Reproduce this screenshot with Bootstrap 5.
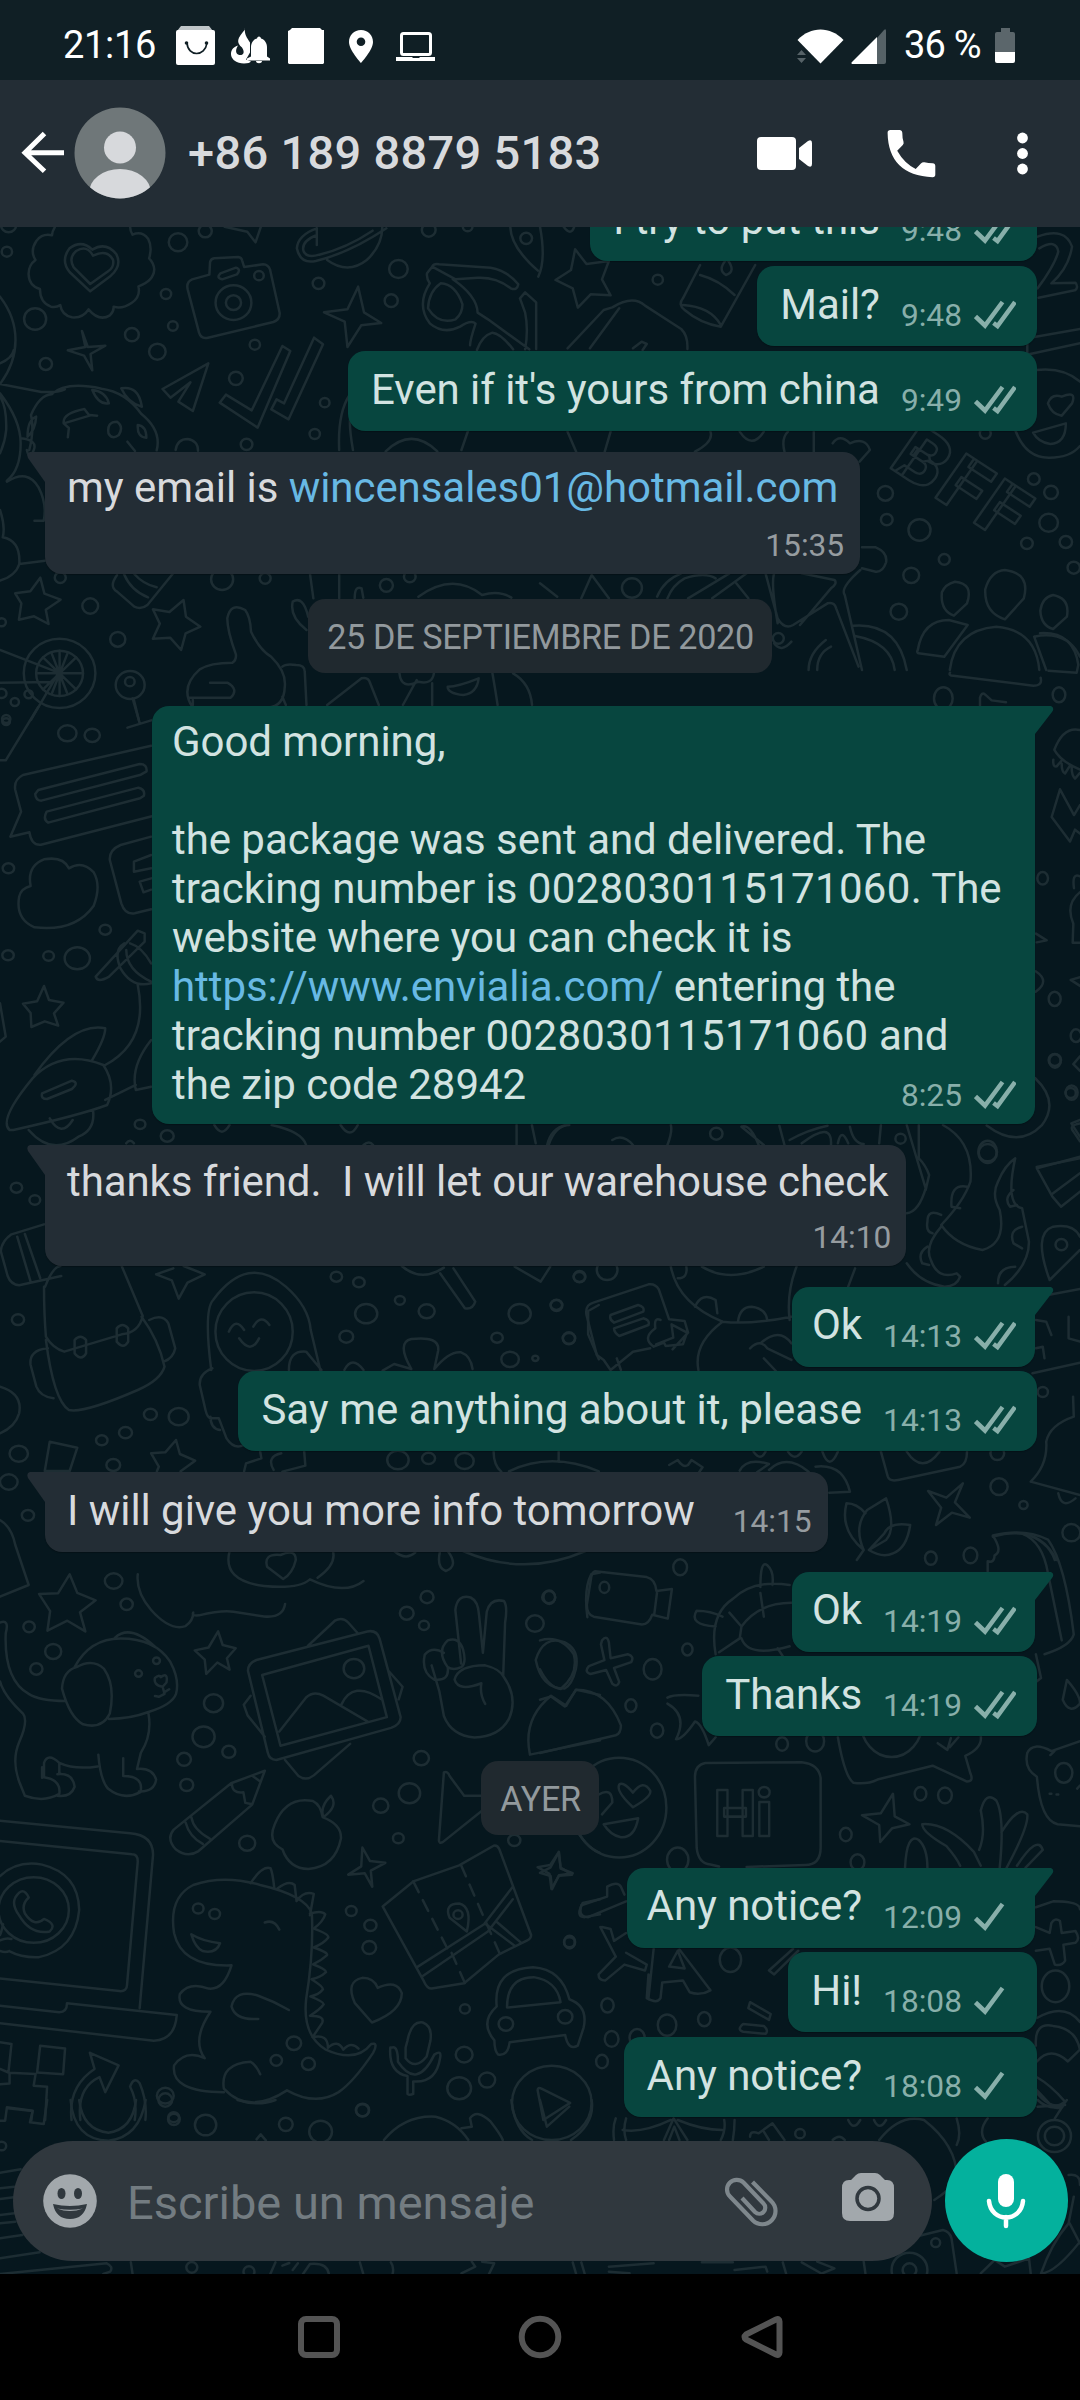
<!DOCTYPE html>
<html lang="es">
<head>
<meta charset="utf-8">
<meta name="viewport" content="width=device-width, initial-scale=1">
<title>Chat</title>
<link rel="stylesheet" href="https://cdn.jsdelivr.net/npm/bootstrap@5.3.0/dist/css/bootstrap.min.css">
<style>
  body { width: 1080px; height: 2400px; background: #000; font-family: Roboto, "Noto Sans", sans-serif; overflow: hidden; }
  svg { display: block; flex: none; }
  .statusbar { height: 80px; background: #101f25; color: #fff; font-size: 38px; line-height: 40px; padding: 0 64px 0 63px; }
  .clock { width: 93px; margin-top: 10px; letter-spacing: -.3px; white-space: nowrap; }
  .topbar { height: 147px; background: #232d35; padding: 0 0 2px 21px; }
  .peer { font-size: 47px; font-weight: 500; line-height: 56px; color: #d8dadd; margin-left: 22px; letter-spacing: .3px; }
  .chat { height: 2047px; background: #06171e; overflow: hidden; }
  .doodles { position: absolute; inset: 0; fill: none; stroke: #1d2d33; stroke-width: 2.5; stroke-linecap: round; stroke-linejoin: round; }
  .doodles * { vector-effect: non-scaling-stroke; }
  .doodles text { font-family: Roboto, sans-serif; font-weight: 900; }
  .thread { position: absolute; inset: 0 0 auto 0; margin-top: -46px; }
  .bubble { position: relative; border-radius: 17px; font-size: 42px; line-height: 49px; letter-spacing: -.05px; box-shadow: 0 1px 1px rgba(0,0,0,.25); white-space: pre; }
  .sent { align-self: flex-end; background: #07463f; color: #d2e3e1; margin-right: 43px; margin-bottom: 5px; padding: 14px 21px 14px 23px; min-height: 80px; }
  .recv { align-self: flex-start; background: #232d35; color: #d8dadd; margin-left: 45px; padding: 12px 16px 12px 22px; }
  .sent.first { margin-right: 45px; padding: 13px 19px 14px 20px; border-top-right-radius: 0; margin-bottom: 4px; }
  .recv.first { border-top-left-radius: 0; }
  .tail { position: absolute; top: 0; }
  .sent .tail { left: 100%; margin-left: -1px; fill: #07463f; }
  .recv .tail { right: 100%; margin-right: -1px; fill: #232d35; }
  .stamp { font-size: 31.7px; line-height: 32px; color: #88afaa; letter-spacing: 0; align-self: flex-end; margin-left: 21px; }
  .recv .stamp { color: #969ca0; }
  .ticks { width: 42px; margin-left: 12px; stroke: #88afaa; fill: none; stroke-width: 4.5; }
  .bubble a { color: #68b9e4; text-decoration: none; }
  .tracking { letter-spacing: .33px; }
  .lastline { height: 52px; }
  .day { align-self: center; background: #20292f; color: #92999d; border-radius: 17px; font-size: 34.2px; letter-spacing: -.35px; line-height: 40px; padding: 18px 18px 16px 19px; }
  .composer { position: absolute; left: 13px; right: 12.5px; bottom: 12px; }
  .field { width: 919px; height: 120px; border-radius: 60px; background: #30383e; padding: 0 38px 0 30px; }
  .hint { font-size: 47px; color: #737c81; line-height: 56px; margin-left: 30px; margin-top: 4px; }
  .mic { width: 123px; height: 123px; border-radius: 50%; background: #04b19d; }
  .sysnav { height: 126px; fill: none; stroke: #545454; stroke-width: 6; }
</style>
<script src="https://cdn.jsdelivr.net/npm/bootstrap@5.3.0/dist/js/bootstrap.bundle.min.js"></script>
</head>
<body class="m-0 d-flex flex-column">

<header>
  <div class="statusbar d-flex align-items-center">
    <span class="clock">21:16</span>
    <svg width="262" height="80" viewBox="174 0 262 80" style="margin-left:18px" fill="#fff">
      <path d="M181 26h28l4 5h-36z" fill="#bfc5c8"/><rect x="176" y="30" width="39" height="35" rx="2"/>
      <path d="M187 43c1 14 18 14 20 0" fill="none" stroke="#101f25" stroke-width="1.7"/><circle cx="186.500" cy="43" r="1.800" fill="#101f25"/><circle cx="206.500" cy="43" r="1.800" fill="#101f25"/>
      <path d="M245 29.500c-8 9-9 13-3 18 4 6 0 9-4 7-3-2-2-6 0-9-11 3-9 18 6 18 4 0 6-1 7-2l-5-2 4-7v-10c-3-5-6-8-5-15z"/>
      <path d="M259 36.500c1 0 2 1 2 2 4 1 6 5 6 9v9l3 2v2h-23v-2l4-2v-9c0-4 2-8 6-9 0-1 1-2 2-2zM256 61h6c0 3-6 3-6 0z"/>
      <path d="M292 28h28l2 2h2v33l-1 1h-34l-1-1V31l2-1z"/>
      <path fill-rule="evenodd" d="M361 30c-7 0-12 5-12 12 0 8 12 21 12 21s12-13 12-21c0-7-5-12-12-12zm0 7.500a4.300 4.300 0 1 1 0 8.600 4.300 4.300 0 0 1 0-8.600z"/>
      <rect x="401.500" y="33.500" width="29" height="21" rx="2" fill="none" stroke="#fff" stroke-width="3"/><path d="M396 57h16l1 1h6l1-1h15v4h-39z"/>
    </svg>
    <svg width="90" height="80" viewBox="797 0 90 80" class="ms-auto" fill="#fff">
      <path d="M797.500 40c13-14 33-14 46 0l-23 23.500z"/><path fill="#566267" d="M797 55l4.500-5 4.500 5zM797 58h9l-4.500 5z"/>
      <path fill="#566267" d="M877 38l7-8q2-2 2 1v31q0 2-2 2h-7z"/><path d="M877 37v27h-25q-1.500-1 0-2z"/>
    </svg>
    <span style="margin:9px 12px 0 17px;width:79px;letter-spacing:-.8px;white-space:nowrap">36 %</span>
    <svg width="21" height="80" viewBox="995 0 21 80"><path d="M1001 28h9v4h3q2 0 2 2v20h-20V34q0-2 2-2h4z" fill="#5b666b"/><path d="M995 52h20v9q0 2-2 2h-16q-2 0-2-2z" fill="#fff"/></svg>
  </div>
  <div class="topbar d-flex align-items-center">
    <svg width="44" height="44" viewBox="21 131 44 44" fill="none" stroke="#fff" stroke-width="5"><path d="M64 152.700H25M44.500 133.500L25 152.700l19.500 18.500"/></svg>
    <svg width="92" height="92" viewBox="0 0 92 92" style="margin-left:9px"><defs><clipPath id="av"><circle cx="46" cy="46" r="45.500"/></clipPath></defs><circle cx="46" cy="46" r="45.500" fill="#6f7779"/><g clip-path="url(#av)" fill="#d7d9dc"><circle cx="46" cy="40.500" r="16"/><ellipse cx="46" cy="86" rx="31" ry="24"/></g></svg>
    <span class="peer">+86 189 8879 5183</span>
    <svg width="323" height="60" viewBox="757 123 323 60" class="ms-auto" fill="#fff">
      <rect x="757" y="137" width="39" height="33" rx="4"/><path d="M799 148l9-7q4-2 4 2v21q0 4-4 2l-9-7z"/>
      <path d="M890.500 130h9q2.500 0 2.800 2.800 0 6 1.200 9 .6 2-.7 3.200l-5.600 5.800q7 12.500 18.500 18.200l5.200-5.600q1.400-1.500 3.500-1.200 4 .8 8.300 1 2.600.2 2.600 2.800v8.500q0 2.700-2.700 2.700-44.300-2-45-44.400 0-2.800 2.900-2.800z"/>
      <circle cx="1022.500" cy="138" r="5.400"/><circle cx="1022.500" cy="153.500" r="5.400"/><circle cx="1022.500" cy="169" r="5.400"/>
    </svg>
  </div>
</header>

<main class="chat position-relative">
  <svg class="doodles" width="1080" height="2047" viewBox="0 227 1080 2047">
    <g transform="translate(0 220) scale(.34436 .33333)" data-dots="25,15,22 20,95,15 102,297,32 133,432,18 383,344,20 457,395,24 482,222,15 502,318,14 517,67,27 596,33,19 740,374,15 685,475,20 943,548,14 914,642,15 925,190,17 1157,147,27 1136,242,19 1245,30,20 1358,20,14 1528,55,17 716,673,17 645,1078,32 770,1075,16 1122,1096,19 1190,1070,17 175,1073,16 262,1158,23 342,1258,22 5,1207,12 173,1360,104 173,1360,68 378,1395,42 377,1385,14 5,1420,14 83,1423,12 43,1446,12 18,1497,12 678,248,52 678,248,22 752,167,14">
      <path d="M159 22q-7 11-8 24-27-7-45 16-20 30-3 58-20 15-20 42 1 36 33 45 0 41 32 53 16 3 27-5 4 30 34 37 32 3 48-24 31 38 62 18 12-12 11-26 25 8 52-11 27-18 20-50 44-16 46-51-2-20-15-33 10-34-3-59-18-24-45-12-7-10-7-22"/>
      <path d="M262 214l-60-58q-27-35 0-71 35-27 66 4 40-25 70 14 17 33-16 64zM262 192l-48-50q-16-28 7-49 32-20 49 14 41-21 58 12 5 21-14 35z"/>
      <path d="M558 178l50-14 2-38q2-9 12-11l70-4q9 1 11 10l6 20 55-8q15 1 20 15l28 130q2 20-18 28l-190 47q-20 5-26-15l-33-130q-5-22 13-30zM640 160l45-17q16 5 3 20l-43 15q-18-4-5-18z"/>
      <path d="M652 20l66 15 24 32 15-45M920 25q-55 20-58 60 10 48 55 38 100-25 205-98M920 45q-48 20-38 50 10 20 45 9 80-20 155-72M920 25v50M950 120q60 45 115 0 45-42 45-98"/>
      <path d="M238 333l17 48 51-4-43 25 5 49-24-44-47-16 51-10zM1040 200l17 77 50 32-58 7-40 65-8-76-60-28 68-9zM605 430l-45 143-42-28 35-58-58 46-23-26zM820 378l23 15-95 230-110-75 18-24 75 47zM912 353l26 20-100 225-50-30 15-30 22 12z"/>
      <path d="M1482 22q2 60 80 130M1255 140q5 -10 20-7l150 10q50 10 80 50-3 20-22 12-40-34-95-32l-65 5zl-15 20q-2 15 8 30-40 65 0 120 40 35 88 10 32-22 45-9-16 50-16 65M1315 178q70 50 72 100l30 20 120 90M1280 190q-35 25-37 75 30 50 80 33 20-17 20-45-20-60-63-63zM1510 235l15-18 32 30v140M1385 390q15-43 45-52 25 3 60 50M1525 388q10-60 0-110l-15-43"/>
      <path d="M0 230q45 60 45 130t-45 132l120 24q50 2 68-8M0 430q35-15 40-40M0 520q60 80 60 150 0 80-40 112M60 655q50 5 38 35-13 35-20 0M0 700q15-35 18-70 2-70-18-100M85 690q15-60 5-105 25-60 60-62 40-40 145-17 70 10 115 75 60 50 45 110M268 510q40 5 48 40-30 5-48-40zM352 505q50-10 60 55-40-10-60-55zM80 650q0-50 25-60-2 40-25 60M185 610q-5-30 60-43l15 20-65 20zl15 14-3 28M260 585l22 2M340 605q-30 0-25 35 10 20 30 5 15-25-5-40zM400 615q-2 37 25 38 0-35-25-38zM370 665l22 28M510 690q5-33 35-33 30 5 30 35M985 690q-5-110 30-165M1025 690q-15-90-5-110M1120 694q75-75 150 0M1340 690l20-60"/>
      <path d="M20 785q60-40 92 17 25 50 15 100h-27M0 870q16 50 8 82 52 10 48 80l75-10M56 1032q-10 35-56 50"/>
      <path d="M117 1073l12 48 47 18-43 30 8 43-42-23-44 10 7-49-18-30 44-6zM533 1140l7 50 42 30-43 20-13 50-32-37-50 3 20-45-20-43 48 8zM340 1065q-25 35 0 50l50 45q20 10 38-5l75-95M360 1062q20 50 70 70M390 1062q25 30 65 40"/>
      <path d="M660 1195q10-50 52-25 15 20 17 65 25 55 58 75 45 45 40 90-2 60-50 63H560q-40-60 20-115 30-20 95-20 12-8 10-25-25-70-25-108zM610 1388h50q35 20 10 45H550M820 1340q10-10 40-5 25 0 25 20l5 100M560 1440v15M820 1430l10 25"/>
      <path d="M900 1060l10 75M985 1060v75M890 1230q-50-40-40-85 30-20 45 45M1030 1135q0-40 20-30l5 28M1215 1130q100-75 185-5 50-15 85 8"/>
      <path d="M0 1290l170 68-80 142M0 1388l150-2M173 1292v136M105 1360h136M125 1312l96 96M221 1312l-96 96M150 1300l46 122M196 1300l-46 122M385 1435l18 65M950 1455l100-80q20-5 25 15l25 65M1160 1360q5 50 55 25 40 10 45-25M1255 1390v65M1210 1380l-40 75M1300 1400q0 20 45 25 40-5 45-50-60 25-90 25zM1430 1360q10 60 15 95M1490 1360q50 30 55 95"/>
    </g>
    <g transform="translate(540 210) scale(.34436 .33333)" data-dots="342,209,15 1003,850,22 1007,929,17 1102,960,32 1434,807,17 1484,847,20 1477,938,27 1414,1000,17 1527,996,18 1550,1073,18 1174,1048,16 1078,1096,23 1042,1205,24 267,1134,29 692,1285,16 1293,670,16">
      <path d="M102 118l33 44 65-9-20 55 25 48-58-3-37 40-15-58-50-25 45-30zM465 165l-50 100q-15 20 5 35 45 40 105 50l100-185M465 195q55 15 100 60M415 285q80 5 110 60M540 150q-25 30 0 45 30-10 5-45M80 415l105-115 25-8q60-38 95-5l105 70q20 20 18 60M145 415l85-120M270 415l25-20 15 7-12 18M1380 660q30 85 100 83 60 0 88-35M1440 480q80-10 128 35M1475 580q10-30 40-20 45-20 30 20l-30 37q-30-5-40-37zM1432 668l95-28q0 60-45 62-35-5-50-34zM1445 80q80-30 100 30-10 65-60 110l70-2q10 15-2 23l-105 22M1450 115q50-30 55 10-10 40-60 110M1415 385l153-28M1420 433l148-33M1415 385v45M850 700q20-30 50 0 45-20 58 20l-30 35M80 665l25 60M205 665l-17 60M495 665q10 30-45 60M580 665q35 55 70 0M710 725q-10-40 10-60M795 725v-60M0 50q18 100-5 150M62 40q30 50 40 0"/>
      <path d="M655 1090l35 135q20 35 45 20l100-65q20-5 25 15l65 175M680 1090q-10 30 10 150M760 1090l95 20q10 10-10 25l-90 110M935 1012h40q35 15 30 45-10 30-30 28l-40-10M930 1080q-60 55-45 75l50 225M780 1380q0-50 50-90M805 1380q0-50 40-70M910 1247q130-10 155 133M915 1278q105 20 115 102M340 1160q20-50 70-70M370 1165q15-40 50-60 60-20 90 0M430 1165l120-75M500 1165l100-75M570 1120l35 45M0 1120l50 40M120 1165l30-70 50 70M680 1300q20 30 50-5"/>
      <path d="M1205 1115q55 5 35 65l-38 37q-40-15-35-70 10-25 38-32zM1350 1080q75 10 55 85l-55 63q-60-20-57-90 15-55 57-58zM1490 1155q50 10 40 65l-40 37q-35-10-37-55 5-40 37-47zM1097 1320q15-90 90-90l55 15-68 95-75-10q-6-3-2-10zM1190 1380q15-120 135-130 115 10 125 130M1435 1280q95-20 133 60M1435 1280l35 100"/>
      <g transform="rotate(34 1222 822)"><text x="1015" y="897" font-size="225" textLength="415" lengthAdjust="spacing">BFF</text></g>
    </g>
    <g transform="translate(880 560) scale(.33333 .3954)" data-dots="537,341,19 488,805,16 524,1110,18 525,1267,17 575,1347,18 588,1203,16 323,1497,28 190,350,28">
      <path d="M210 285q-5 7 10 8l240 25q28 0 22-20M300 368v-20q5-15 15-8l20 15 43 5M480 185q100-5 115 80l-5 20-85-5M600 430q-50-10-77 50 20 30 77 50M520 505q-2 20 10 17l15-15M545 515q0 20 10 25l15-20M575 525q0 20 10 28l15-15M540 580l-25 70 55 62 15-30 15 10M540 580l42 65 18-25M600 840q-45 30-20 80l-2 48 22 0M600 800q-25-10-18 30M468 945l32 17-30 5M467 1040q45 25 0 52M600 1055l-28 7 28 15M600 1255l-20 20 20 17M465 1310q75 60 20 120-70 60-165 0M600 1425q-35 5-20 20l20 25M470 1535l130-22"/>
    </g>
    <g transform="translate(0 680) scale(.38265 .33333)" data-dots="176,160,24 241,166,20 16,125,10 22,565,15 21,826,15 127,828,14 202,835,33 275,749,15 366,1333,14 437,1368,17">
      <path d="M350 60l15 70M333 143l62-22M0 241h15l85-160M395 197L60 285q-25 15-20 45l15 65-28 75 50-13q5 40 30 37l290-85M100 330l265-78q20 0 18 22l-15 10-260 78q-15 0-16-20zM122 395l240-72q18 5 14 24l-10 8-240 73q-15-10-4-33zM395 470l-80 25q-30 15-28 45l30 130q10 35 35 30l43-12M395 525l-45 20v30l45-10M395 595l-30 10 10 32 20-8M50 650q5-25 30-32-10-60 35-80 50-10 65 27 35-25 65 12 20 40 0 100-50 80-155 65-50-25-40-92zM115 918l13 42 38 8-25 32 11 37-35-13-35 17-2-42-20-28 37-7zM250 890l110-138 18 8v25L285 890q-30 20-35 0zM325 790q-30 20-10 75 30 60 80 45M340 790q30 10 55 60M330 810q0 60 65 95M360 915q30 170-85 240M90 1185q100-160 185-140 0 30-35 97M25 1350q-30-30 60-155 75-90 185-40 35 60 10 120-70 30-245 75zM110 1240l78-38q20 5 0 25l-65 30q-17 0-13-17zM75 1350q60 80 130 20 45-20 38-80M130 1315q30 60 60 5M275 1260l80-45M395 1080q-55 80-40 150l40-10M0 970l15 100-15 15M560 1335q20 40 40 0M710 1335q80 20 90 60M890 1335q25 45 45 0M1350 1335v60M1430 1395q10-50 50-60M1390 1335l10 55M330 1390q10-15 20 0M950 1395q15-15 25 0"/>
    </g>
    <g transform="translate(0 1130) scale(.38265 .33333)" data-dots="43,173,15 91,210,14 47,569,16 393,853,17 467,860,26 328,908,17 266,931,15 296,1005,18 49,971,24 23,1056,23 73,1156,16 297,1353,23 879,440,15 938,457,15 957,551,29 905,620,18 1045,511,13 1115,544,21 1358,551,29 1454,525,15 1514,441,15 1299,623,15 1487,625,16 1333,688,23 1399,685,8 1040,990,28 1120,985,17 1214,993,24">
      <ellipse cx="664" cy="605" rx="101" ry="118"/>
      <path d="M115 283l-85 30q-25 20-28 50l18 75q8 25 30 28l110-28M45 320l35 135M65 312l40 132M118 470q20-60 40-62M318 408l55 150q-10 50-55 55l-150 52q-30-10-48-45-5-70-5-150M120 630q20 180 60 210 40 10 180-60 60-30 70-70-15-80-60-150M125 655q-50 5-45 50l15 65q10 30 45 35M390 570q35-20 50 10l18 75q-5 30-30 40M195 630q15-20 30 0v40q-12 25-30 0zM305 595q15-20 30 0v40q-12 25-30 0zM408 433l45-18M480 408l55 25-45 25-23 48-18-55-41-18M0 770q60 20 50 80-10 40-50 60M552 720q-20-180 5-210 90-140 190-40 60 60 65 130l25 120M555 715q-35 15-33 50l15 75q5 25 15 25h20l20 60q20 35 45 20M550 860q0 35 25 40M755 720q0-60 45-55l40 55M598 605q18-45 40-5M662 590q20-40 42-5M625 625q30 50 52 0M130 935l72 18-20 70h-65zM460 930l10 42 40 20-38 32M460 930l-28 37-37 3 20 40-5 14M680 965l3 20-40 15-5 24M715 1020q-20-40 20-50M795 965l3 42-60 18M0 1170q30 20 40 75l35 120-75 35M600 1263q-20 90 90 105 90 10 120-20 90 50 140 5M870 1263q10 40-40 80M740 1347l-42-37q-10-40 35-35 40-20 40 15-8 40-33 57zM1150 1263q-10 50 15 60 35-15 5-60M1030 1263q30 30 55 5M1210 1263q160 80 320 0M1050 408q50 50 110 5M1150 430l65 105q20 5 27-20l-57-100M1345 410l68 45 25-45M1565 525l-28 18v70l28 75M1000 722l30-20 45 15q-40-80 0-90 75-10 70 35l-10 55q40-55 70-50 25 10 30 50M900 720q20-45 50 0M1290 965q0 40 20 60M1460 965v30M1330 1024q110-60 235 0"/>
    </g>
    <g transform="translate(540 1060) scale(.34436 .33333)" data-dots="115,650,17 195,630,30 48,736,17 84,835,18 512,221,18 1047,236,15 1300,278,26 1541,99,15 1495,0,18 1514,554,17 1460,996,15 1333,1280,25 1404,1335,12 1543,1418,26 1328,1180,20">
      <path d="M205 930l-20-30-20-15-30-120q-5-30 20-37l160-55q20-3 30 15l30 90 45 5 10 35-45 50M235 930l-12-35M205 930l65-55 50-10M205 765l80-30q20 5 15 20l-85 33q-15-10-10-23zM215 805l85-30q20 5 15 20l-85 33q-15-10-15-23zM350 780q-20-10-15 25-40 30-5 55l30-12 5 10 50-5 12-35-45-25 5 40-50 20M380 620q20 110 150 165 80 10 200-15M400 655q30 0 25-35M450 740q20-45 60-20l5 40M575 785q5-45 40-45 40 5 45 40M530 785q-85 65-70 145M725 780q-10-80 20-160M470 620q80 50 180 0M895 680l20-55M610 865q30-30 50 0l70 35M640 850q55-50 90 0M650 895l35 38M25 255q20-60 60-60M370 255q15-40 10-60M210 240q30-20 60 15M585 200l65 55M585 200q25-10 50 55M695 197l15 58M725 240q50-30 110-43M760 250q90-70 85 5M865 250q10-50 30 0M900 200q10 50 40 52M990 195l-5 55M1065 195l55 190q-20 70-55 75M1100 195v100q20 20 30 50l-10 45M1170 195q90 50 80 170-20 60-85 130M1240 380q-50-10-45 60l25 5M1165 465q-40-20-40 20-5 30 15 35M1165 495q40 60 120 75 70-20 50-120-25-45-5-85 20-50 50-70-30 140 20 150l20 100q0 70-70 130M1375 390q-30 25-10 50l20-5M1400 500q-40 10-25 50l25 15M1165 500q-50 60-30 100 20 60 75 40l10 10q-10 30-45 30-70-10-110-70M1125 560q-30 20-15 50l20 5M1380 620q-50 0-50 50M1568 180l-25 10 25 40M1568 290l-125 35 45 85 25 30 55-45M1490 400l78-60M1480 660q-50-140 10-160 60-10 78 30M1480 660l88-90M1440 712l128-25M1535 770v65l33 10M1440 780l30 5 15 40M1440 865l20-5 5 35M1430 940l138-32M990 1175l20 75q5 15 30 10l180-40q20-10 20-45M1065 1175q45 70 95 0M1425 1265q50-50 45-120 10-50 80-75l-2-60M1425 1265l143 40M1505 1300q10 50 50 15M1228 1270l-23 57 43 46-52-15-46 37 15-52-38-50 53 20zM940 1470q-30-70 10-120l55-35q30 90 0 125l-50 30 45-50q15-35 75-25-10 70-50 85-30 15-70-10M940 1470q-70-60-50-140 30 0 55 30M920 1500l20-30M1315 1430q130-40 185 70M1400 1420q75 20 95 80M375 1215l25-15q15 25 30 15l10-15 32 22-10 15M580 1232q20-40 85-20l-35 25M665 1230q50-50 115 5M800 1220q80-10 100 75l-60 3M620 1175q20 30 35 0M720 1175q20 30 40 0M820 1175q20 60 45 0"/>
    </g>
    <g transform="translate(0 1560) scale(.38265 .35714)" data-dots="331,124,16 76,187,15 139,256,21 95,305,16 362,318,9 409,282,9 558,401,25 532,495,29 598,537,17 481,558,18 488,630,17 646,793,21 925,304,27 1116,104,17 1063,149,18 1108,183,13 1434,104,17 1398,178,23 1101,555,20 1070,653,28 995,688,20 1041,779,14 1344,785,16 918,983,14 968,1023,16 965,1085,18 1488,1070,14 1215,1257,13 1213,1385,22 1273,1456,21 1200,1479,31 947,1541,17 768,1353,19 722,1401,15 806,1411,17 432,1500,22 518,976,14 561,991,14 1322,1299,19 1477,1279,19 1197,993,12 454,1560,14 88,980,92 1442,1520,104">
      <path d="M182 40l20 52 48 21-41 33 14 54-47-30-52 28 7-55-29-48 50-2zM570 200l12 38 34 9-23 28 7 32-32-20-29 32-4-40-26-26 36-8zM360 40q-5 50 35 100 50 60 90 45 20-15 20-38-5 10 15 8 60-15 90-10l80 13q50 5 55-35"/>
      <path d="M0 340q10 40 60 90 15 20-10 80-20 50 0 110l15 40q50 20 90-5 5-40-40-47v-40q10-30 40 0 40 20 100 10M110 610v-30M155 600v-30M150 600q40-5 45 35-10 30-45 25M0 175q25-10 15 30-5 130 60 170 30 20 95 20M200 300q-35 10-38 60 20 80 55 100 50 15 70-30 15-80-15-125-30-30-72-5zM195 300q40-80 120-80 90 0 130 65 25 50 15 90-10 30-70 50-50 20-105 20M300 218q40-40 105 25M388 430q10 60-20 110l-10 45q40-5 50 30-5 35-45 33M257 545q5 70 25 95 40 35 85 10 10-45-45-45v-50M405 330q10-10 15-2 20-15 15 15l-10 12q-25-5-20-25zM425 355l5 20-15 8-10-2M430 370l12-8"/>
      <path d="M670 280l290-80q25-5 32 20l55 220q0 20-25 30l-300 90q-18 0-22-20l-52-230q0-20 22-30zM685 322l278-82 48 200-278 80zM730 480l70-95q20-20 45-5l115 72M892 405q30-70 105-15M805 240l70-70q20-12 35 5l25 30M1015 310l37 45-10 35M655 380l-18 25 10 30 45 60M745 560l35 45q20 15 40-2l95-88"/>
      <path d="M1205 290L1190 140q5-45 40-35 20 10 22 50l10 105 10-115q10-40 45-30 10 15 3 60l-5 150q40 60 15 120-25 50-90 52-60-5-80-60l-12-70-20-72M1188 335q10-40 80-40 40 10 50 35M1188 335q10 35 70 10-5 30 10 58M1170 300q-30-45 0-75 30-10 40 25 10 40-5 50-20 10-35 0zM1160 260q-30-20-50 5-10 50 25 70 40 5 35-35"/>
      <path d="M692 590l-88 35-150 130q-20 25 5 55 30 25 60 5l140-130zM606 625q0 30 30 25l5 30 15 3M660 605l20 15M500 720q5 35 48 60M485 735q10 40 45 60M738 810q-40-20-20-70 30-80 100-65 20 10 25 45 50 20 48 60-15 80-85 85-50 0-68-55zM845 720q-10-30 20-60 20 30-20 60M1160 595q10-5 15 10l38 55h45M1160 595l-13 190q0 10 10 5l105-90M947 805l20 38 40 5-38 22 4 45-20-38-43 4 34-23zM1460 818l5 43 30 20-34 3-20 37-5-42-31-19 33-6z"/>
      <path d="M605 1135q-130 5-150-90-15-100 50-135 80-30 175 0 120 30 135 80 5 110-15 240-10 100 50 140 80 40 120-15 20-5 5 25-50 80-90 110-60 40-135-5-100 70-165-5-10-70 70-75 15 10 25 35M605 1135q-20 70-60 65-50-20-75 15-10 50 80 50-50 80-15 130-50-25-80 20-10 75 130 75M500 1048q30 20 75 25-10 30-45 22-20-10-30-47zM692 1015q25-10 38 20M675 1285q-60 5-70-35 10-50 70-30 40 15 80 40"/>
      <path d="M655 905q30-50 52-42 5 10 10 57M725 920q30-25 45-10l5 45M775 955q20-30 45-20l-10 60M810 990q30-10 40 2-5 20-30 40 40 15 38 25-10 15-38 28 40 15 34 22-15 15-36 25 35 15 34 22-15 15-38 20 30 20 30 28-10 15-33 20 35 15 35 22-10 15-36 32 40 0 32 20l-25 40q40-10 40 30 25-25 40 5 20-25 40-3"/>
      <path d="M1000 970l80-70 120-45 90-55q10-2 15 10l83 240q0 10-10 15l-75 40-90 80-85 15q-12 0-20-20zM1090 1140l175-120 75-105M1105 1165l170-125 65-90M1270 1020l75 60M1300 1015l60 55" /><path d="M1080 900l90 190M1205 855l100 245M1180 1100l35 85" stroke-dasharray="12 9"/>
      <path d="M1220 1040l-45-38q-15-40 25-40 35 10 20 78zM972 1295l-45-55q-25-60 20-70 30 0 40 28 50-25 63 15 0 50-78 82z"/>
      <path d="M0 730l340 35q60 5 60 60l-35 430M0 787l345 37q15 0 15 20l-28 345q0 20-20 18l-312-35M0 1248l155 18q20 0 20-25l287 33q-5 70-60 72L0 1297M0 1065q15-8 30-4M0 885q45-45 110-32 95 25 97 127-10 110-105 132-45 2-78-17M0 1095q15 5 24 0M8 1020q-5 25-8 30M40 945q20-35 35 0-20 20-10 45 25 40 50 15 35 15 15 35-50 10-80-45-20-30-10-50z"/>
      <path d="M0 1350l30 5-8 80-22-10M105 1360l65 8-5 72-68-5zM0 1468l25-2v-30l68 3-5 33 35 3-5 93M20 1535l65 8-3 25M235 1380l75 35-35 75-15-42q-60 30-50 120M235 1380l12 45q-70 50-60 143M340 1475q10-30 25-10 20 50 15 103M340 1475q20 40 12 93M1065 1345q10-55 40-50 25 10 20 50l-10 45q-30 40-55 5v-30zM1025 1365q15-5 15 40 50 80 95-20 20-15 15 10-10 70-70 65v35q-10 5-15 0v-50q-50-10-45-80z"/>
      <path d="M1298 1250q-10-105 95-110 75 5 95 90 50 20 37 80l-15 50q-25 15-33-30l-145 20q-5 40-30 35-10-10-10-40-40-50 6-95zM1325 1253q0-85 70-85 60 10 70 70zM1405 1485q0-10 10-5l75 40-70 48M1405 1485l15 83M1400 280q20-70 75-50 40 20 30 75-10 45-30 55-60 0-75-80zM1385 545q-20-100 55-165l40 28 25-45 63 15M1385 545l183-40M1568 950l-45 10q-20 40 5 40l40-8M1535 160q-10-80 10-120l23-5M1515 770q25 40 53 50"/>
    </g>
    <g transform="translate(540 1500) scale(.34436 .3954)" data-dots="27,246,17 407,170,20 187,221,14 428,378,15 327,428,26 264,520,16 340,583,18 703,617,17 799,610,26 1135,147,17 1250,140,20 1105,743,17 1176,747,20 888,846,17 922,916,20 400,910,31 86,1118,16 196,1278,18 369,1328,27 477,1313,18 208,1363,20 180,1420,17 282,1360,22 553,1163,31 1497,1230,40 1521,690,25 1021,560,90">
      <ellipse cx="230" cy="778" rx="137" ry="126"/>
      <path d="M160 180l150 15q25 5 28 35l45-5-12 75-45-10q-10 25-30 25l-140-20q-20-5-20-30l12-65q2-18 12-20zM340 233l-8 55M180 355q15-15 20 5l5 40 50-10q20 5 10 20l-50 15 15 35q-5 15-20 5l-18-35-45 10q-20-5-5-20l45-15-10-40zM370 500q20-10 90-5M370 515q60 30 25 90 20 0 55-45 20 5 40 60l20-20M510 390q-20-100 50-140 60-50 165-35M520 385l60-35 5-30q50-60 145-60M585 350q20 50 140 20M640 235l10 60M690 375l15 20M550 285l35 35M640 220q0-70 20-55 20 15 15 50M510 320q-80-5-55-40 40 0 75 15M0 355q60-15 98 35 15 50-38 88-35-5-60-50M0 505l32-8 40 25 33-42q90 0 130 90 0 20-15 25L0 640"/>
      <path d="M1315 90q90-20 160 10 50 60 75 240-10 30-85 50M1315 90q30 40 5 50 0 20-20 15v25M1400 85q60 20 75 100l40 170M1440 390l15 60-15 10M1530 455q40 40 38 60-30 30-50-10zM865 600q20 100 45 115 40 5 70-8l160-35 100 40q20 0 10-20l-15-45q50-20 45-50M1155 615l28 17 10-30M1190 625l25-25M1415 640q15-30 70-5l83-25M1415 640q-10 40 28 60 10 110 60 120l65 5M1482 645l12-10M1560 730l8-8M1480 743h5M1500 745h5M230 720q10-10 40 20 30-35 50-5 5 15-50 42-50-40-40-57zM170 745q40-20 40 20l-30 30M185 820l100-15q-10 50-50 48-30-5-50-33z"/>
      <path d="M480 665l280-2q50 5 55 40v175q0 45-45 45l-170 5M480 665q-30 5-30 35l5 180q5 40 40 42l25 5M1025 743l5 57 43 20-50 10-35 35-3-43-50-25 55-5zM55 890l5 42 35 12-40 5-20 35-4-33-31-8 30-13z"/>
      <path d="M1060 930q5-90 40-70 25 20 25 70M1110 820q70-5 150 70l20 35M1110 820q0 20 70 55 30 30 40 50M1275 885q20-40 5-100 15-50 45-25 25 40 10 170M1340 840q50-70 75-45 5 30-60 135M1385 925q60-80 75-40l-50 45M250 1015l-110 40q-30 0-20-30l75-22v-25q30-15 40 0l10 20M180 1080l25 5 10 30 35-20M250 1145l60 30-5 15-60-15-55 40q-20 0-20-15l50-45-45-75M315 1200l-5 60q30 15 40 0l5-40 60-5 20 30q30 10 60-5l-90-103M315 1260l15-125M400 1140l-25 40 45 5zM665 1190l70-55M665 1190l15 10 70-60M610 1270l60 30-5 15-60-30zM590 1325l60 5q15 12 5 20l-65-5q-20-5 0-20z"/>
      <path d="M1440 1030l50-15q78 0 78 20M1440 1080l40 15 5-25q10-15 25-5l5 30 40-5q15 20 0 30l-35 5 5 40q-10 15-30 10l-15-40-40 5M1443 1310q80-40 125 10M1440 1380q-5-60 50-50 65 5 78 60l-35 30q-50-40-90 0M1443 1460q40 20 80 60-5 30-40 10l-43-40M1443 1500q50 50 82 20"/>
      <text x="505" y="850" font-size="166" textLength="170" lengthAdjust="spacingAndGlyphs">Hi</text>
    </g>
    <g transform="translate(0 2100) scale(.34436 .33333)" data-dots="505,58,17 597,75,31 830,73,20 931,95,33 1053,30,19 480,0,20 557,502,16 723,515,16 5,138,13">
      <path d="M0 62h15l5-40 75 10-8 35 40 5 10-72M205 0q10 120 110 122 90-10 108-122M230 0q10 90 85 98 70-10 80-98M690 0q60 20 110 0M1115 120q60-75 150-70 60 15 95 70M1340 85l30-5-5-25q20-30 60 10 30 40 35 55M1485 0q10 90 60 120M745 118l12-15 15 18M0 218l60-10M0 265l42-5M0 297l40-5M0 345l42-5M0 370l45-5M0 415l65-10M0 475l115-18M0 522l310-32q20 10 10 25l-20 7M380 487l5 35M785 522l15-35M820 497l20-8M850 510l15-20M880 522l20-30q50-5 55 30M1045 487l10 35M1140 522q5-20-5-35M1340 520l40-20-10-15M1400 485l35 5-15 32"/>
    </g>
    <g transform="translate(540 2100) scale(.34436 .33333)" data-dots="755,101,14 1494,108,48 1494,108,28 1149,428,13 1073,510,52 1073,510,20">
      <path d="M215 120q-5-40 5-65M250 120q-10-30 0-65M240 90q60 10 140-30M525 120q15-30 10-60M560 120q5-30 5-60M360 120l28-65 40 65M375 120l15-40 15 40M400 60q70 30 130 30M610 110q0-20 25-10l40-30 35 50M650 95l15 25M895 60q15 35 35 0M970 60q15 35 35 0M850 120q20-20 35 0M985 120q60-80 130-60 100 80 95 180-20 30-65 60M1210 55q15 50 0 80M1300 55q-30 40-5 70M1445 20l80-5M1445 0q30 30 70 20l15-20M1520 15l-25 40M0 0l20 80 65-60M150 0q10 70-60 120M1090 410l80-20q20 5 25 25l15 105M940 485l5 35M705 487l10 35M760 487l60 35M805 485l50 20-40 17M200 500l130-10M200 515l60 5M470 487l90 0M95 487l10 35M120 487l10 35M565 510l90-10 5 15M1535 225q35-5 33 30M1568 430l-30-60M1550 290l-15 80q-50 60-80 150 40 0 113-95M1280 520l40-40 30 20 70-25 5 45"/>
    </g>
  </svg>

  <div class="thread d-flex flex-column">
    <div class="bubble sent d-flex">I try to put this<span class="stamp">9:48</span><svg class="ticks align-self-end" height="32" viewBox="0 0 42 32"><path d="M1.500 16.500l9.500 9L28.500 2M19.500 23l4 3L41 2"/></svg></div>
    <div class="bubble sent d-flex">Mail?<span class="stamp">9:48</span><svg class="ticks align-self-end" height="32" viewBox="0 0 42 32"><path d="M1.500 16.500l9.500 9L28.500 2M19.500 23l4 3L41 2"/></svg></div>
    <div class="bubble sent d-flex">Even if it's yours from china<span class="stamp">9:49</span><svg class="ticks align-self-end" height="32" viewBox="0 0 42 32"><path d="M1.500 16.500l9.500 9L28.500 2M19.500 23l4 3L41 2"/></svg></div>

    <div class="bubble recv first d-flex flex-column" style="padding-right:22px;padding-top:11px;margin-top:16px"><svg class="tail" width="19" height="30" viewBox="0 0 19 30"><path d="M19 0H3Q-1 1 1 6l17 24h1z"/></svg><span>my email is <a href="#">wincensales01@hotmail.com</a></span><span class="stamp" style="margin-top:18px;margin-right:-6px">15:35</span></div>

    <div class="day" style="margin-top:25px;margin-bottom:33px">25 DE SEPTIEMBRE DE 2020</div>

    <div class="bubble sent first d-flex flex-column" style="padding:11px 19px 12px 20px;width:883px"><svg class="tail" width="20" height="30" viewBox="0 0 20 30"><path d="M0 0h17q4 2 1 6L1 28v2H0z"/></svg><div>Good morning,</div><br><div>the package was sent and delivered. The</div><div>tracking number is <span class="tracking">0028030115171060</span>. The</div><div>website where you can check it is</div><div><a href="#">https://www.envialia.com/</a> entering the</div><div>tracking number <span class="tracking">0028030115171060</span> and</div><div class="lastline d-flex justify-content-between"><span>the zip code 28942</span><span class="d-flex align-self-end"><span class="stamp">8:25</span><svg class="ticks align-self-end" height="32" viewBox="0 0 42 32"><path d="M1.500 16.500l9.500 9L28.500 2M19.500 23l4 3L41 2"/></svg></span></div></div>

    <div class="bubble recv first d-flex flex-column" style="margin-top:17px;padding-right:18px;letter-spacing:-.08px"><svg class="tail" width="19" height="30" viewBox="0 0 19 30"><path d="M19 0H3Q-1 1 1 6l17 24h1z"/></svg><span>thanks friend.  I will let our warehouse check</span><span class="stamp" style="margin-top:16px;margin-right:-3px">14:10</span></div>

    <div class="bubble sent first d-flex" style="margin-top:21px"><svg class="tail" width="20" height="30" viewBox="0 0 20 30"><path d="M0 0h17q4 2 1 6L1 28v2H0z"/></svg>Ok<span class="stamp">14:13</span><svg class="ticks align-self-end" height="32" viewBox="0 0 42 32"><path d="M1.500 16.500l9.500 9L28.500 2M19.500 23l4 3L41 2"/></svg></div>
    <div class="bubble sent d-flex" style="letter-spacing:0">Say me anything about it, please<span class="stamp">14:13</span><svg class="ticks align-self-end" height="32" viewBox="0 0 42 32"><path d="M1.500 16.500l9.500 9L28.500 2M19.500 23l4 3L41 2"/></svg></div>

    <div class="bubble recv first d-flex" style="margin-top:16px;padding-top:14px;padding-bottom:14px;height:80px"><svg class="tail" width="19" height="30" viewBox="0 0 19 30"><path d="M19 0H3Q-1 1 1 6l17 24h1z"/></svg>I will give you more info tomorrow<span class="stamp" style="margin-left:38px">14:15</span></div>

    <div class="bubble sent first d-flex" style="margin-top:20px"><svg class="tail" width="20" height="30" viewBox="0 0 20 30"><path d="M0 0h17q4 2 1 6L1 28v2H0z"/></svg>Ok<span class="stamp">14:19</span><svg class="ticks align-self-end" height="32" viewBox="0 0 42 32"><path d="M1.500 16.500l9.500 9L28.500 2M19.500 23l4 3L41 2"/></svg></div>
    <div class="bubble sent d-flex">Thanks<span class="stamp">14:19</span><svg class="ticks align-self-end" height="32" viewBox="0 0 42 32"><path d="M1.500 16.500l9.500 9L28.500 2M19.500 23l4 3L41 2"/></svg></div>

    <div class="day" style="margin-top:20px;margin-bottom:33px">AYER</div>

    <div class="bubble sent first d-flex"><svg class="tail" width="20" height="30" viewBox="0 0 20 30"><path d="M0 0h17q4 2 1 6L1 28v2H0z"/></svg>Any notice?<span class="stamp">12:09</span><svg class="ticks align-self-end" height="32" viewBox="0 0 42 32"><path d="M1.500 16.500l9.500 9L28.500 2"/></svg></div>
    <div class="bubble sent d-flex">Hi!<span class="stamp">18:08</span><svg class="ticks align-self-end" height="32" viewBox="0 0 42 32"><path d="M1.500 16.500l9.500 9L28.500 2"/></svg></div>
    <div class="bubble sent d-flex">Any notice?<span class="stamp">18:08</span><svg class="ticks align-self-end" height="32" viewBox="0 0 42 32"><path d="M1.500 16.500l9.500 9L28.500 2"/></svg></div>
  </div>

  <div class="composer d-flex align-items-center justify-content-between">
    <div class="field d-flex align-items-center">
      <svg width="54" height="54" viewBox="0 0 54 54"><circle cx="27" cy="27" r="26.800" fill="#a2a8ac"/><g fill="#30383e"><ellipse cx="18.500" cy="19.500" rx="4" ry="5.500"/><ellipse cx="35" cy="19.500" rx="4" ry="5.500"/><path d="M10 30q17 4 34 0-3 15-17 15T10 30z"/></g><path d="M14 34.500q13 2.500 26 0-13 5-26 0z" fill="#a2a8ac"/></svg>
      <span class="hint">Escribe un mensaje</span>
      <svg class="ms-auto" width="170" height="60" viewBox="724 2171 170 60"><path d="M752.500 2182l19 19.500a13 13 0 0 1-18.500 19l-23-24a9.500 9.500 0 0 1 13.500-14l20 21a6 6 0 0 1-8.500 8.500l-13-14" fill="none" stroke="#7e878c" stroke-width="4.200"/>
      <path fill="#a2a8ac" d="M851 2180l5-5q2-2 5-2h14q3 0 5 2l5 5h2q7 0 7 8v25q0 8-8 8h-36q-8 0-8-8v-25q0-8 7-8z"/><circle cx="868" cy="2198.500" r="11" fill="none" stroke="#30383e" stroke-width="3.500"/></svg>
    </div>
    <div class="mic d-flex align-items-center justify-content-center"><svg width="40" height="56" viewBox="0 0 40 56"><rect x="12" y="1" width="16" height="33" rx="8" fill="#fff"/><path d="M3 28c2 22 32 22 34 0M20 44v9" fill="none" stroke="#fff" stroke-width="4.500" stroke-linecap="round"/></svg></div>
  </div>
</main>

<footer class="sysnav">
  <svg width="1080" height="126" viewBox="0 2274 1080 126"><rect x="301" y="2319" width="36" height="36" rx="5"/><circle cx="540" cy="2337" r="18.300"/><path d="M746 2334.500l30-15q3.500-1.500 3.500 2v31q0 3.500-3.500 2l-30-15q-3-2.500 0-5z"/></svg>
</footer>

<script>
  // Confetti circles of the wallpaper: each group lists them as "x,y,r".
  document.querySelectorAll('[data-dots]').forEach(function (g) {
    g.dataset.dots.split(' ').forEach(function (d) {
      var p = d.split(','), c = document.createElementNS('http://www.w3.org/2000/svg', 'circle');
      c.setAttribute('cx', p[0]); c.setAttribute('cy', p[1]); c.setAttribute('r', p[2]);
      g.appendChild(c);
    });
  });
</script>
</body>
</html>
